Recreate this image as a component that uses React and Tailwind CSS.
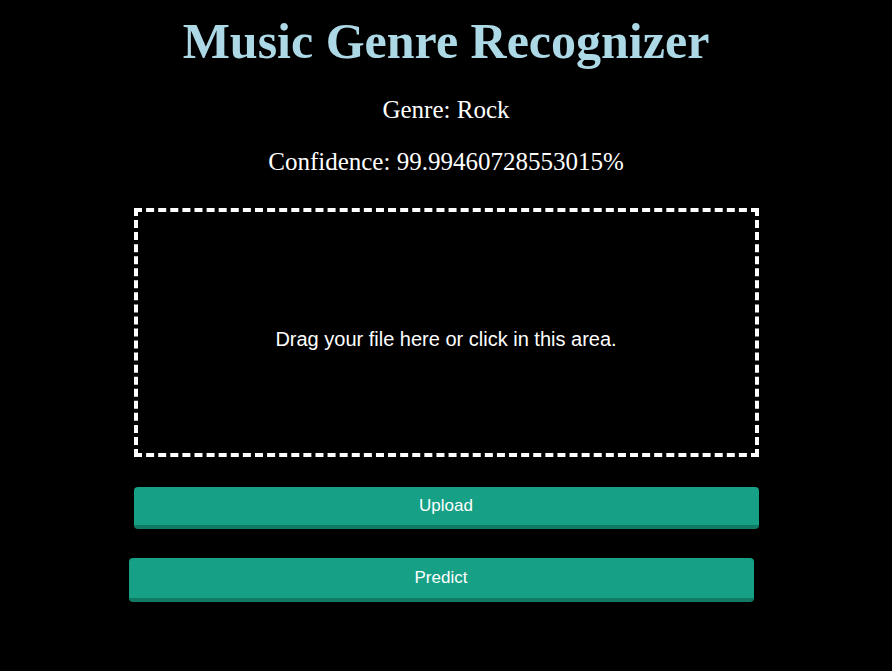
export default function App() {
  return (
    <div className="min-h-[671px] w-full bg-black flex flex-col items-center">
      <h1 className="mt-[13px] mb-0 text-[50px] leading-[57px] font-bold text-[#add8e6] font-['Liberation_Serif',serif]">
        Music Genre Recognizer
      </h1>
      <p className="mt-[25px] text-[25px] leading-[29px] text-white font-['Liberation_Serif',serif]">Genre: Rock</p>
      <p className="mt-[23px] text-[25px] leading-[29px] text-white font-['Liberation_Serif',serif]">
        Confidence: 99.99460728553015%
      </p>
      <div className="mt-[32px] w-[625px] h-[249px] border-4 border-dashed border-white flex items-center justify-center">
        <span className="text-[20px] leading-[24px] text-white font-['Liberation_Sans',sans-serif] mt-[12px]">
          Drag your file here or click in this area.
        </span>
      </div>
      <button className="mt-[30px] w-[625px] h-[42px] rounded-[4px] bg-[#16a085] border-b-4 border-[#117a65] text-white text-[17px] font-['Liberation_Sans',sans-serif]">
        Upload
      </button>
      <button className="mt-[29px] mr-[10px] w-[625px] h-[44px] rounded-[4px] bg-[#16a085] border-b-4 border-[#117a65] text-white text-[17px] font-['Liberation_Sans',sans-serif]">
        Predict
      </button>
    </div>
  );
}
